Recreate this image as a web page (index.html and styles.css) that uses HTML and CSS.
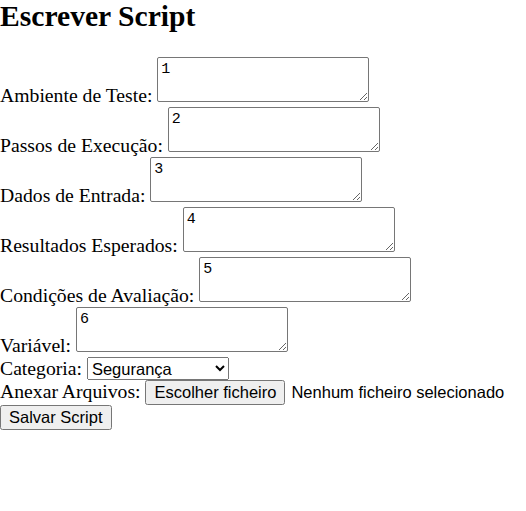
FILE: index.html
```html
<!DOCTYPE html>
<html lang="pt">
<head>
<meta charset="utf-8">
<link rel="stylesheet" href="styles.css">
</head>
<body>
<h1 class="title">Escrever Script</h1>
<form class="form">
  <div class="row"><label>Ambiente de Teste: </label><textarea class="field">1</textarea></div>
  <div class="row"><label>Passos de Execução: </label><textarea class="field">2</textarea></div>
  <div class="row"><label>Dados de Entrada: </label><textarea class="field">3</textarea></div>
  <div class="row"><label>Resultados Esperados: </label><textarea class="field">4</textarea></div>
  <div class="row"><label>Condições de Avaliação: </label><textarea class="field">5</textarea></div>
  <div class="row"><label>Variável: </label><textarea class="field">6</textarea></div>
  <div class="row row-compact"><label>Categoria: </label><select class="select"><option>Segurança</option><option>Desempenho</option><option>Funcional</option></select></div>
  <div class="row row-compact"><label>Anexar Arquivos: </label><button type="button" class="btn">Escolher ficheiro</button><span class="file-status">Nenhum ficheiro selecionado</span></div>
  <div class="row row-compact"><button type="submit" class="btn">Salvar Script</button></div>
</form>
</body>
</html>
```
FILE: styles.css
```css
body {
  margin: 0;
  font-family: "Liberation Serif", serif;
  font-size: 19.7px;
  color: #000;
  background: #fff;
}
.title {
  font-size: 29.6px;
  font-weight: bold;
  margin: 0 0 25px 0;
  line-height: 32px;
}
.row {
  display: block;
  line-height: 24px;
}
.row-compact {
  line-height: 21px;
}
.field {
  box-sizing: border-box;
  width: 212px;
  height: 45px;
  font-family: "Liberation Mono", monospace;
  font-size: 15px;
  line-height: 17px;
  padding: 3px 3px;
  border: 1px solid #767676;
  border-radius: 2px;
  vertical-align: baseline;
  margin: 0;
}
.select {
  box-sizing: border-box;
  font-family: "Liberation Sans", sans-serif;
  font-size: 16.5px;
  width: 142px;
  height: 23px;
  margin: 0;
}
.btn {
  box-sizing: border-box;
  font-family: "Liberation Sans", sans-serif;
  font-size: 16.5px;
  height: 25px;
  margin: 0;
  padding: 1px 7px;
}
.file-status {
  font-family: "Liberation Sans", sans-serif;
  font-size: 16.5px;
  margin-left: 6px;
}
```
